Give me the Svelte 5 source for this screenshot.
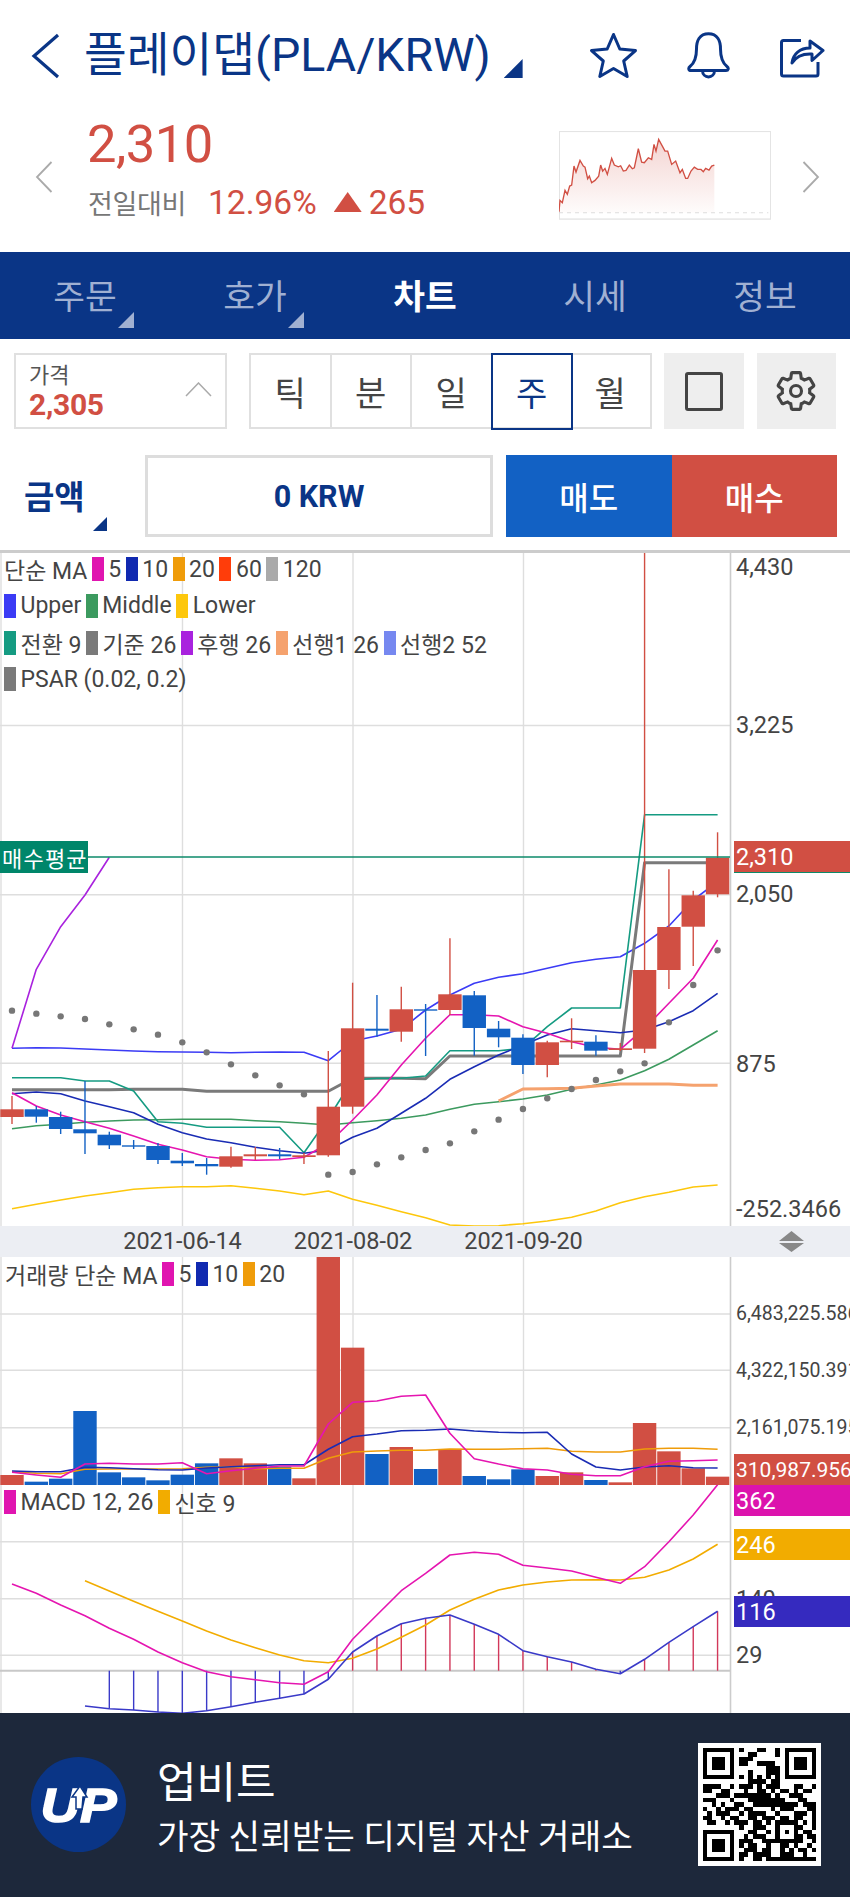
<script>
  const X = (i) => 12 + 24.33 * i;
  const M = (z) => 800 + z / 3;
  const V = (z) => 1230 + z / 3;
  const pts = (arr, f, start = 0) => arr.map((z, i) => `${X(i + start).toFixed(1)},${f(z).toFixed(1)}`).join(' ');

  const mainLines = [
    { c: '#3b3bf5', w: 1.6, d: pts([745,743,744,747,750,753,755,756,757,758,757,756,757,782,723,708,688,630,585,550,532,521,505,488,478,470,430,378,300,245], M) },
    { c: '#a922de', w: 1.6, d: pts([745,508,380,285,172], M) },
    { c: '#3c9a5f', w: 1.6, d: pts([986,977,973,967,963,960,959,958,958,958,962,965,970,975,968,962,955,945,928,913,905,897,885,868,855,840,812,778,735,692], M) },
    { c: '#fdc70c', w: 1.6, d: pts([1226,1213,1200,1188,1178,1168,1163,1160,1160,1157,1165,1173,1184,1173,1198,1216,1235,1253,1275,1278,1277,1271,1263,1252,1233,1208,1190,1177,1161,1155], M) },
    { c: '#f5a26e', w: 3, d: pts([903,867,866,865,858,852,852,852,856,856], M, 20) },
    { c: '#7a7a7a', w: 3, d: pts([869,869,869,869,869,868,868,868,874,874,874,874,874,874,835,835,835,836,768,768,768,768,768,768,768,768,188,188,188,188], M) },
    { c: '#159b82', w: 1.6, d: pts([833,833,833,843,843,873,965,970,982,982,982,982,1058,955,840,835,835,828,752,752,752,745,680,624,624,624,44,44,44,44], M) },
    { c: '#1a2cb4', w: 1.6, d: pts([881,876,881,903,920,938,973,998,1017,1028,1042,1052,1060,1050,1012,985,940,895,838,800,765,735,705,686,692,698,690,665,632,580], M) },
    { c: '#e515b0', w: 1.6, d: pts([878,918,945,965,985,1008,1033,1050,1070,1078,1081,1079,1072,1030,960,885,795,715,644,644,648,680,700,725,742,748,685,610,535,420], M) },
  ];
  const psar = [632,641,649,657,673,688,704,727,757,793,826,856,883,1124,1116,1093,1072,1050,1030,994,959,927,895,867,840,814,790,667,555,451];
  const R = '#d14f43', B = '#1261c4';
  const candles = [
    [R,1109.3,1117,1096,1124],[B,1109.3,1116.7,1106,1122.7],[B,1117,1129,1111.7,1134],[B,1129.3,1133.3,1081,1154],
    [B,1134.7,1145.3,1131.7,1149],[B,1145.3,1146.7,1140,1149],[B,1146,1160,1143,1164],[B,1160.7,1163.3,1153,1166],
    [B,1164,1166.3,1158,1174.7],[R,1156.3,1166.7,1146.7,1167.7],[R,1154.3,1156.3,1147,1160],[B,1154.3,1156.3,1148,1159],
    [R,1155.3,1157,1153,1164],[R,1106.7,1155.3,1051,1156.7],[R,1028.3,1106.7,982.7,1113.7],[B,1028.7,1030.7,995,1036.7],
    [R,1009.3,1031.7,986.7,1041.7],[B,1009.3,1010.7,1004,1056],[R,994.3,1010,938.3,1015],[B,995.3,1028,991,1055.7],
    [B,1028.7,1037.3,1021,1047.3],[B,1037.7,1065,1034.3,1074],[R,1042.3,1065,1040.7,1077.3],[R,1040.7,1042.3,1018.3,1049],
    [B,1041.7,1050.7,1035.3,1055.7],[R,1048.3,1050,1043,1051],[R,970,1048.7,551,1053],[R,927,970,869.3,989],
    [R,895.3,926.7,890.7,966],[R,857.7,894.3,832.3,897.3],
  ];
  const volTops = [735,755,746,543,727,742,751,734,700,685,700,710,745,80,353,672,651,717,658,738,748,718,738,727,750,757,579,664,715,740];
  const volLines = [
    { c: '#ef9c0a', d: pts([725,730,731,718,717,717,717,716,712,710,716,715,715,685,666,663,661,661,657,658,658,656,655,664,666,666,657,655,655,658], V) },
    { c: '#1a2cb4', d: pts([723,725,725,712,713,716,719,720,714,710,707,704,704,658,620,612,602,601,597,603,607,608,607,672,711,720,711,707,713,714], V) },
    { c: '#e515b0', d: pts([727,735,742,702,700,702,702,698,731,722,715,708,708,582,517,513,499,495,610,686,702,716,720,733,737,737,710,694,692,690], V) },
  ];
  const histZ = [null,null,null,1428,1436,1440,1446,1450,1442,1430,1417,1405,1392,1348,1266,1218,1181,1165,1155,1183,1213,1262,1280,1296,1318,1331,1288,1237,1190,1144];
  const macdLines = [
    { c: '#f2ac00', d: pts([1052,1083,1114,1144,1173,1203,1230,1253,1275,1292,1298,1285,1257,1222,1185,1140,1108,1080,1065,1056,1050,1049,1050,1042,1020,987,943], V, 3) },
    { c: '#e515b0', d: pts([1062,1090,1125,1157,1195,1228,1266,1298,1325,1340,1349,1358,1363,1325,1228,1155,1082,1030,975,967,973,1006,1014,1023,1042,1060,1010,935,855,764], V) },
    { c: '#3a3ac8', d: pts(histZ.slice(3), V, 3) },
  ];
  const vgrid = [1, 182.5, 353, 523.5];
  const spark = [[12,262],[15,228],[22,235],[30,198],[37,210],[44,185],[50,182],[57,125],[63,143],[75,108],[85,125],[90,128],[98,163],[103,155],[110,175],[120,168],[131,155],[137,122],[143,140],[150,132],[157,150],[170,102],[178,122],[190,127],[197,124],[205,140],[213,138],[223,122],[232,133],[238,130],[250,73],[260,113],[268,115],[280,100],[290,105],[297,60],[303,80],[311,45],[322,65],[330,80],[338,80],[350,120],[362,110],[375,145],[382,135],[392,162],[398,162],[408,140],[418,128],[428,135],[438,135],[445,142],[452,132],[462,137],[470,125],[478,122]];
  const sparkLine = spark.map(([x, y]) => `${x},${y}`).join(' ');
  const sparkArea = `12,265 ${sparkLine} 478,265`;

  const qr = [
    '1111111010001100101111111','1000001000110000101000001','1011101011100000001011101','1011101011001111001011101',
    '1011101000000011101011101','1000001000100011101000001','1111111010101010101111111','0000000000111101100000000',
    '1111001011101011100011001','1100110001001101011010110','0001110111111110100111000','1110001000111111110001100',
    '0010100110011111111110111','1001011101100001011100011','0101110010111100100011101','1100101100110111011011001',
    '0110010111011010111110101','0000000010011100100011001','1111111000110010101010110','1000001001011100100011011',
    '1011101011100111111111001','1011101010110010011010010','1011101001110110010101101','1000001011011110011100100',
    '1111111010011011111111111',
  ];
  const qrCells = qr.flatMap((row, r) => [...row].map((v, c) => (v === '1' ? [c, r] : null)).filter(Boolean));

  const legend = [
    [['', '단순 MA'], ['#e015b0', '5'], ['#1029b0', '10'], ['#ef9c0a', '20'], ['#ff3d0a', '60'], ['#aaaaaa', '120']],
    [['#3b3bf5', 'Upper'], ['#3c9a5f', 'Middle'], ['#fdc70c', 'Lower']],
    [['#159b82', '전환 9'], ['#7a7a7a', '기준 26'], ['#a922de', '후행 26'], ['#f5a26e', '선행1 26'], ['#7688f0', '선행2 52']],
    [['#7a7a7a', 'PSAR (0.02, 0.2)']],
  ];
  const volLegend = [['', '거래량 단순 MA'], ['#e015b0', '5'], ['#1029b0', '10'], ['#ef9c0a', '20']];
  const macdLegend = [['#e015b0', 'MACD 12, 26'], ['#f2ac00', '신호 9']];
  const mainAxis = [['4,430', 567.5], ['3,225', 725.5], ['2,050', 894.5], ['875', 1065], ['-252.3466', 1210]];
  const volAxis = [['6,483,225.586', 1313.7], ['4,322,150.391', 1371], ['2,161,075.195', 1428]];
  const macdAxis = [['140', 1600], ['29', 1655.7]];
  const periods = ['틱', '분', '일', '주', '월'];
  const tabs = [['주문', true], ['호가', true], ['차트', false], ['시세', false], ['정보', false]];
</script>

{#snippet legendRow(items)}
  <div class="lrow">
    {#each items as [color, label]}
      <span class="litem">
        {#if color}<i class="sw" style:background={color}></i>{/if}
        <span>{label}</span>
      </span>
    {/each}
  </div>
{/snippet}

{#snippet grid(lines)}
  {#each lines as y}<line x1="0" x2="730" y1={y} y2={y} class="gl" />{/each}
{/snippet}

<div class="page">
  <header class="head">
    <svg class="back" viewBox="0 0 29 46"><path d="M27 2 L3 23 L27 44" /></svg>
    <h1>플레이댑(PLA/KRW)</h1>
    <i class="tri"></i>
    <div class="icons">
      <svg class="ic star" viewBox="0 0 49 47"><path d="M24.5 2.5 L30.8 17 L46.5 18.6 L34.7 29 L38.2 44.5 L24.5 36.5 L10.8 44.5 L14.3 29 L2.5 18.6 L18.2 17 Z" /></svg>
      <svg class="ic bell" viewBox="0 0 43 47"><path d="M21.5 1.8 C12.5 1.8 9.5 9 9.5 17 C9.5 26 7.5 31 3 34.5 C1 36 1.6 38.5 4 38.5 L39 38.5 C41.4 38.5 42 36 40 34.5 C35.5 31 33.5 26 33.5 17 C33.5 9 30.5 1.8 21.5 1.8 Z" /><path d="M15.5 38.5 C15.5 47 27.5 47 27.5 38.5" /></svg>
      <svg class="ic share" viewBox="0 0 45 45"><path d="M21 7.5 L3.5 7.5 C2.2 7.5 1.5 8.2 1.5 9.5 L1.5 41 C1.5 42.3 2.2 43 3.5 43 L36 43 C37.3 43 38 42.3 38 41 L38 29" /><path d="M12 30 C13 21 20 15 30 15 L30 8 L43 17.5 L32 27.5 L32 21 C23 20.5 16 23.5 12 30 Z" /></svg>
    </div>
  </header>

  <section class="quote">
    <svg class="nav" viewBox="0 0 18 32"><path d="M16.5 1 L2 16 L16.5 31" /></svg>
    <div class="price">
      <div class="big">2,310</div>
      <div class="chg"><span class="lbl">전일대비</span><span class="pct">12.96%</span><i class="up"></i><span class="amt">265</span></div>
    </div>
    <svg class="spark" viewBox="12 20 636 265">
      <defs><linearGradient id="sg" x1="0" y1="0" x2="0" y2="1"><stop offset="0" stop-color="#d14f43" stop-opacity=".24" /><stop offset="1" stop-color="#d14f43" stop-opacity=".02" /></linearGradient></defs>
      <rect x="13" y="21" width="634" height="263" class="sbox" />
      <polygon points={sparkArea} fill="url(#sg)" />
      <line x1="12" x2="640" y1="265" y2="265" class="sdash" />
      <polyline points={sparkLine} class="sline" />
    </svg>
    <svg class="nav next" viewBox="0 0 18 32"><path d="M1.5 1 L16 16 L1.5 31" /></svg>
  </section>

  <nav class="tabs">
    {#each tabs as [t, arrow], i}
      <div class="tab" class:on={i === 2}>{t}{#if arrow}<i class="ttri"></i>{/if}</div>
    {/each}
  </nav>

  <section class="tools">
    <div class="pbox">
      <div class="ptxt"><span class="plbl">가격</span><span class="pval">2,305</span></div>
      <svg class="chev" viewBox="0 0 27 15"><path d="M1 14 L13.5 1 L26 14" /></svg>
    </div>
    <div class="seg">
      {#each periods as p, i}<div class="cell" class:sel={i === 3}>{p}</div>{/each}
    </div>
    <button class="gbtn sq" aria-label="전체화면"><i class="rectic"></i></button>
    <button class="gbtn gear" aria-label="설정">
      <svg viewBox="0 0 24 24"><path d="M19.43 12.98c.04-.32.07-.64.07-.98 0-.34-.03-.66-.07-.98l2.11-1.65c.19-.15.24-.42.12-.64l-2-3.46c-.09-.16-.26-.25-.44-.25-.06 0-.12.01-.17.03l-2.49 1c-.52-.4-1.08-.73-1.69-.98l-.38-2.65C14.46 2.18 14.25 2 14 2h-4c-.25 0-.46.18-.49.42l-.38 2.65c-.61.25-1.17.59-1.69.98l-2.49-1c-.06-.02-.12-.03-.18-.03-.17 0-.34.09-.43.25l-2 3.46c-.13.22-.07.49.12.64l2.11 1.65c-.04.32-.07.65-.07.98 0 .33.03.66.07.98l-2.11 1.65c-.19.15-.24.42-.12.64l2 3.46c.09.16.26.25.44.25.06 0 .12-.01.17-.03l2.49-1c.52.4 1.08.73 1.69.98l.38 2.65c.03.24.24.42.49.42h4c.25 0 .46-.18.49-.42l.38-2.65c.61-.25 1.17-.59 1.69-.98l2.49 1c.06.02.12.03.18.03.17 0 .34-.09.43-.25l2-3.46c.12-.22.07-.49-.12-.64l-2.11-1.65z" /><circle cx="12" cy="12" r="3" /></svg>
    </button>
  </section>

  <section class="order">
    <div class="amt-l">금액<i class="otri"></i></div>
    <div class="input">0 KRW</div>
    <div class="sell">매도</div>
    <div class="buy">매수</div>
  </section>

  <section class="panel main">
    <svg viewBox="0 550 850 676" class="chart">
      {@render grid([725.5, 894.7, 1063.3])}
      {#each vgrid as x}<line x1={x} x2={x} y1="552" y2="1226" class="gl" />{/each}
      <line x1="730.5" x2="730.5" y1="552" y2="1226" class="axis" />
      {#each mainLines as l}<polyline points={l.d} class="ln" stroke={l.c} stroke-width={l.w} />{/each}
      {#each psar as z, i}<circle cx={X(i)} cy={M(z)} r="3.2" class="dot" />{/each}
      {#each candles as [c, t, b, wt, wb], i}
        <line x1={X(i)} x2={X(i)} y1={wt} y2={wb} stroke={c} stroke-width="1.4" />
        <rect x={X(i) - 11.7} y={t} width="23.4" height={b - t} fill={c} />
      {/each}
      <line x1="0" x2="730" y1="857" y2="857" class="avg" />
    </svg>
    <div class="legend">{#each legend as row}{@render legendRow(row)}{/each}</div>
    {#each mainAxis as [t, y]}<span class="ax" style:top="{y - 550}px">{t}</span>{/each}
    <div class="avgtag">매수평균</div>
    <div class="curtag">2,310</div>
  </section>

  <div class="dates">
    <span class="date" style:left="182.5px">2021-06-14</span>
    <span class="date" style:left="353px">2021-08-02</span>
    <span class="date" style:left="523.5px">2021-09-20</span>
    <svg class="sort" viewBox="0 0 25 21"><path d="M12.5 0 L25 10 L0 10 Z M0 12 L25 12 L12.5 21 Z" /></svg>
  </div>

  <section class="panel vol">
    <svg viewBox="0 1257 850 228" class="chart">
      {@render grid([1314, 1370.3, 1427.7])}
      {#each vgrid as x}<line x1={x} x2={x} y1="1257" y2="1485" class="gl" />{/each}
      <line x1="730.5" x2="730.5" y1="1257" y2="1485" class="axis" />
      {#each volTops as z, i}
        <rect x={X(i) - 11.7} y={V(z)} width="23.4" height={1485 - V(z)} fill={candles[i][0]} />
      {/each}
      {#each volLines as l}<polyline points={l.d} class="ln" stroke={l.c} stroke-width="1.6" />{/each}
    </svg>
    <div class="legend small">{@render legendRow(volLegend)}</div>
    {#each volAxis as [t, y]}<span class="ax tiny" style:top="{y - 1257}px">{t}</span>{/each}
    <div class="vtag">310,987.956</div>
  </section>

  <section class="panel macd">
    <svg viewBox="0 1485 850 228" class="chart">
      {@render grid([1541.7, 1598.7, 1655.3])}
      {#each vgrid as x}<line x1={x} x2={x} y1="1485" y2="1713" class="gl" />{/each}
      <line x1="730.5" x2="730.5" y1="1485" y2="1713" class="axis" />
      <line x1="0" x2="730" y1="1670.7" y2="1670.7" class="zero" />
      {#each histZ as z, i}
        {#if z !== null && i > 3}
          <line x1={X(i)} x2={X(i)} y1="1670.7" y2={V(z)} stroke={V(z) < 1670.7 ? '#d2385a' : '#3a3ac8'} stroke-width="1.4" />
        {/if}
      {/each}
      {#each macdLines as l}<polyline points={l.d} class="ln" stroke={l.c} stroke-width="1.6" />{/each}
    </svg>
    <div class="legend small">{@render legendRow(macdLegend)}</div>
    {#each macdAxis as [t, y]}<span class="ax" style:top="{y - 1485}px">{t}</span>{/each}
    <div class="mtag pink">362</div>
    <div class="mtag gold">246</div>
    <div class="mtag indigo">116</div>
  </section>

  <footer class="banner">
    <svg class="logo" viewBox="0 0 95 95">
      <circle cx="47.5" cy="47.5" r="47.5" fill="#0a3586" />
      <text x="47.5" y="65" text-anchor="middle" textLength="76" lengthAdjust="spacingAndGlyphs" class="uptext">UP</text>
      <path d="M45 52 L45 40 L41 40 L49 29 L56 40 L52 40 L51 52 Z" fill="#fff" stroke="#0a3586" stroke-width="1.5" />
    </svg>
    <div class="btxt">
      <div class="bt1">업비트</div>
      <div class="bt2">가장 신뢰받는 디지털 자산 거래소</div>
    </div>
    <svg class="qr" viewBox="-1 -1 27 27" shape-rendering="crispEdges">
      <rect x="-1" y="-1" width="27" height="27" fill="#fff" />
      {#each qrCells as [c, r]}<rect x={c} y={r} width="1" height="1" fill="#000" />{/each}
    </svg>
  </footer>
</div>

<style>
  :global(body) { margin: 0; background: #fff; }
  .page { width: 850px; height: 1897px; overflow: hidden; font-family: Roboto, "Noto Sans CJK KR", sans-serif; color: #444; }
  i { display: block; font-style: normal; }

  .head { display: flex; align-items: center; height: 47px; padding: 32px 25px 0 31px; }
  .back { width: 29px; height: 46px; flex: none; }
  .back path { fill: none; stroke: #0a3586; stroke-width: 3.2; }
  h1 { margin: 0 0 0 24px; font-size: 46.5px; font-weight: 400; color: #0a3586; white-space: nowrap; line-height: 47px; }
  .tri { width: 19px; height: 19px; margin: 26px 0 0 13px; background: #0a3586; clip-path: polygon(100% 0, 100% 100%, 0 100%); }
  .icons { display: flex; align-items: center; margin-left: auto; }
  .ic { display: block; fill: none; stroke: #0a3586; stroke-width: 3; stroke-linejoin: round; }
  .star { width: 49px; height: 47px; }
  .bell { width: 43px; height: 47px; margin-left: 49px; }
  .share { width: 45px; height: 45px; margin-left: 50px; }

  .quote { display: flex; align-items: flex-start; height: 173px; padding-left: 35px; }
  .nav { width: 18px; height: 32px; margin-top: 82px; flex: none; }
  .nav path { fill: none; stroke: #aaa; stroke-width: 1.8; }
  .next { margin-left: 31px; }
  .price { width: 471px; margin-left: 35px; flex: none; }
  .big { font-size: 52.5px; line-height: 54px; margin-top: 38px; color: #d14f43; letter-spacing: -.5px; margin-left: -1px; }
  .chg { display: flex; align-items: center; height: 30px; margin-top: 16px; }
  .lbl { font-size: 27px; color: #777; width: 120px; letter-spacing: -.3px; }
  .pct, .amt { font-size: 33.5px; color: #d14f43; }
  .up { width: 28px; height: 20px; margin: 0 7px 0 17px; background: #d14f43; clip-path: polygon(50% 0, 100% 100%, 0 100%); }
  .spark { width: 212px; height: 88.5px; margin-top: 52px; flex: none; }
  .sbox { fill: #fff; stroke: #e4e4e4; stroke-width: 4; }
  .sdash { stroke: #ccc; stroke-width: 2; stroke-dasharray: 12 12; }
  .sline { fill: none; stroke: #d14f43; stroke-width: 4; }

  .tabs { display: grid; grid-template-columns: repeat(5, 170px); height: 87px; background: #0a3586; }
  .tab { position: relative; display: flex; align-items: center; justify-content: center; font-size: 34.5px; color: #a0b0d2; padding-bottom: 4px; box-sizing: border-box; }
  .tab.on { color: #fff; font-weight: 700; }
  .ttri { position: absolute; left: 118px; bottom: 11px; width: 16px; height: 16px; background: #a0b0d2; clip-path: polygon(100% 0, 100% 100%, 0 100%); }

  .tools { display: flex; height: 76px; margin: 14px 0 0 14px; }
  .pbox { display: flex; justify-content: space-between; align-items: center; width: 213px; box-sizing: border-box; border: 2.5px solid #e0e0e0; padding: 0 13px 0 13px; }
  .ptxt { display: flex; flex-direction: column; }
  .plbl { font-size: 22px; line-height: 27px; color: #555; }
  .pval { font-size: 30px; line-height: 32px; font-weight: 700; color: #d14f43; letter-spacing: -.3px; }
  .chev { width: 27px; height: 15px; margin-bottom: 4px; }
  .chev path { fill: none; stroke: #aaa; stroke-width: 1.5; }
  .seg { display: flex; width: 402.5px; height: 76px; margin-left: 22px; box-sizing: border-box; border: 2.5px solid #e0e0e0; }
  .cell { flex: 1; display: flex; align-items: center; justify-content: center; font-size: 34px; color: #444; border-right: 2px solid #e0e0e0; position: relative; }
  .cell:last-child { border-right: none; }
  .cell.sel { color: #0a3586; outline: 2.5px solid #0a3586; outline-offset: 0; border-right: none; z-index: 1; margin: -0.5px 0; }
  .gbtn { display: flex; align-items: center; justify-content: center; border: none; padding: 0; background: #eee; height: 76px; }
  .sq { width: 80px; margin-left: 12px; }
  .rectic { width: 38px; height: 39px; box-sizing: border-box; border: 3px solid #444; border-radius: 3px; }
  .gear { width: 79px; margin-left: 13px; }
  .gear svg { width: 44px; height: 44px; fill: none; stroke: #444; stroke-width: 1.7; }

  .order { display: flex; height: 82px; margin: 26px 0 0 14px; }
  .amt-l { position: relative; width: 131px; box-sizing: border-box; padding: 21px 0 0 10px; font-size: 33px; font-weight: 700; color: #0a3586; line-height: 44px; }
  .otri { position: absolute; left: 79px; top: 62px; width: 14px; height: 14px; background: #0a3586; clip-path: polygon(100% 0, 100% 100%, 0 100%); }
  .input { width: 348px; box-sizing: border-box; border: 3px solid #ddd; display: flex; align-items: center; justify-content: center; font-size: 30.5px; font-weight: 700; color: #0a3586; }
  .sell, .buy { width: 165.5px; display: flex; align-items: center; justify-content: center; font-size: 32px; color: #fff; font-weight: 500; }
  .sell { margin-left: 13px; background: #1261c4; }
  .buy { background: #d14f43; }

  .panel { position: relative; overflow: hidden; }
  .main { height: 676px; margin-top: 13px; }
  .main::before { content: ""; position: absolute; left: 0; right: 0; top: 0; height: 2.5px; background: #ccc; z-index: 1; }
  .vol, .macd { height: 228px; }
  .chart { display: block; width: 850px; height: 100%; }
  .gl { stroke: #dedede; stroke-width: 1.4; }
  .axis { stroke: #ccc; stroke-width: 1.6; }
  .ln { fill: none; stroke-linejoin: round; }
  .dot { fill: #777; }
  .avg { stroke: #0d8a6a; stroke-width: 1.6; }
  .zero { stroke: #c8c8c8; stroke-width: 2; }

  .legend { position: absolute; left: 4px; top: 7px; display: flex; flex-direction: column; gap: 12.8px; }
  .legend.small { top: 5px; }
  .vol .legend { left: 5px; }
  .lrow { display: flex; height: 24px; gap: 4.5px; align-items: center; font-size: 23px; color: #444; white-space: nowrap; }
  .litem { display: flex; align-items: center; gap: 4.5px; }
  .sw { width: 12px; height: 24px; flex: none; }

  .ax { position: absolute; left: 736px; transform: translateY(-50%); font-size: 23.5px; color: #444; white-space: nowrap; line-height: 1; }
  .ax.tiny { font-size: 19.5px; }
  .avgtag, .curtag { position: absolute; top: 291px; height: 32px; display: flex; align-items: center; color: #fff; box-sizing: border-box; }
  .avgtag { left: 0; width: 88px; background: #00866a; font-size: 22px; padding-left: 2px; letter-spacing: 1.2px; white-space: nowrap; }
  .curtag { left: 734px; width: 116px; background: #d14f43; font-size: 23.5px; padding-left: 2px; border-bottom: 1.5px solid #0d8a6a; }

  .dates { position: relative; height: 31px; background: #eceef3; }
  .date { position: absolute; top: 0; line-height: 31px; font-size: 23.5px; color: #444; transform: translateX(-50%); white-space: nowrap; }
  .sort { position: absolute; left: 779px; top: 5px; width: 25px; height: 21px; fill: #888; }

  .vtag { position: absolute; left: 734px; top: 197px; width: 116px; height: 31px; background: #d14f43; color: #fff; font-size: 21px; display: flex; align-items: center; padding-left: 2px; box-sizing: border-box; white-space: nowrap; overflow: hidden; }
  .mtag { position: absolute; left: 734px; width: 116px; height: 31px; color: #fff; font-size: 23.5px; display: flex; align-items: center; padding-left: 2px; box-sizing: border-box; }
  .pink { top: 0; background: #dc13ad; }
  .gold { top: 44px; background: #f2ac00; }
  .indigo { top: 111px; background: #352abf; }

  .banner { position: relative; display: flex; height: 184px; background: #1d283b; color: #fff; }
  .logo { width: 95px; height: 95px; margin: 44px 0 0 31px; flex: none; }
  .uptext { font-family: "Liberation Sans", sans-serif; font-style: italic; font-weight: 700; font-size: 48px; fill: #fff; stroke: #fff; stroke-width: 1.5; }
  .btxt { margin-left: 31px; }
  .bt1 { font-size: 43px; line-height: 50px; margin-top: 45px; }
  .bt2 { font-size: 34.3px; line-height: 40px; margin-top: 9px; white-space: nowrap; }
  .qr { position: absolute; left: 697.5px; top: 30px; width: 123px; height: 123px; }
</style>
